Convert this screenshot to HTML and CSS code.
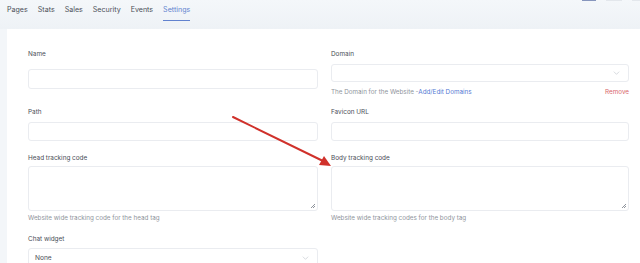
FILE: index.html
```html
<!DOCTYPE html>
<html lang="en">
<head>
    <meta charset="UTF-8">
    <meta name="viewport" content="width=device-width, initial-scale=1.0">
    <link rel="stylesheet" href="styles.css">
</head>
<body>

    <div class="topbar">
        <nav class="tabs">
            <a class="tab">Pages</a>
            <a class="tab">Stats</a>
            <a class="tab">Sales</a>
            <a class="tab">Security</a>
            <a class="tab">Events</a>
            <a class="tab active">Settings</a>
        </nav>
        <div class="toolbar">
            <span class="tool-btn primary"></span>
            <span class="tool-btn"></span>
            <span class="tool-btn last"></span>
        </div>
    </div>

    <div class="card">
        <div class="form-grid">
            <div class="field">
                <label class="field-label name-label">Name</label>
                <input class="input" type="text">
            </div>
            <div class="field">
                <label class="field-label">Domain</label>
                <div class="select small">
                    <span></span>
                    <svg class="chevron" viewBox="0 0 10 6"><path d="M1 1l4 4 4-4" fill="none" stroke="#c4c8cf" stroke-width="1"/></svg>
                </div>
                <div class="help-row">
                    <span class="help">The Domain for the Website -<a class="link">Add/Edit Domains</a></span>
                    <a class="remove">Remove</a>
                </div>
            </div>

            <div class="field">
                <label class="field-label">Path</label>
                <input class="input short" type="text">
            </div>
            <div class="field">
                <label class="field-label">Favicon URL</label>
                <input class="input short" type="text">
            </div>

            <div class="field">
                <label class="field-label tight">Head tracking code</label>
                <div class="textarea"><span class="grip"></span></div>
                <span class="help">Website wide tracking code for the head tag</span>
            </div>
            <div class="field">
                <label class="field-label tight">Body tracking code</label>
                <div class="textarea"><span class="grip"></span></div>
                <span class="help">Website wide tracking codes for the body tag</span>
            </div>

            <div class="field">
                <label class="field-label tight">Chat widget</label>
                <div class="select">
                    <span class="select-value">None</span>
                    <svg class="chevron" viewBox="0 0 10 6"><path d="M1 1l4 4 4-4" fill="none" stroke="#c4c8cf" stroke-width="1"/></svg>
                </div>
            </div>
        </div>

        <svg class="arrow" width="110" height="60" viewBox="0 0 110 60">
            <line x1="2" y1="2" x2="92" y2="46" stroke="#d0312b" stroke-width="2" stroke-linecap="round"/>
            <polygon points="100,51 88,50 93,41" fill="#d0312b"/>
        </svg>
    </div>

</body>
</html>
```

FILE: styles.css
```css
body {
    margin: 0;
    padding: 0;
    background-color: #f3f6f9;
    font-family: "Inter", "Liberation Sans", sans-serif;
    color: #4a4e57;
    overflow: hidden;
}

.topbar {
    display: flex;
    justify-content: space-between;
    align-items: flex-start;
    height: 29px;
    background: linear-gradient(#f4f7fa, #eef2f6);
}

.tabs {
    display: flex;
    gap: 10px;
    padding-left: 7px;
    padding-top: 4px;
}

.tab {
    font-size: 7.1px;
    line-height: 12px;
    padding-bottom: 4px;
    color: #4a4e57;
    border-bottom: 1px solid transparent;
}

.tab.active {
    color: #6182cf;
    border-bottom-color: #6182cf;
}

.toolbar {
    display: flex;
    gap: 10px;
}

.tool-btn {
    display: block;
    width: 16px;
    height: 1px;
    background-color: #e3e7ec;
}

.tool-btn.primary {
    width: 14px;
    background-color: #8796bd;
}

.tool-btn.last {
    width: 8px;
}

.card {
    position: relative;
    background-color: #fff;
    margin-left: 7px;
    padding: 20px 0 0 21px;
    height: 300px;
}

.form-grid {
    display: grid;
    grid-template-columns: 290px 298px;
    column-gap: 13px;
}

.field {
    display: flex;
    flex-direction: column;
    padding-bottom: 10px;
}

.field-label {
    font-size: 6.4px;
    line-height: 10px;
    color: #4a4e57;
    margin-bottom: 5px;
}

.field-label.name-label {
    margin-bottom: 10px;
}

.field-label.tight {
    margin-bottom: 3px;
}

.field:nth-child(3),
.field:nth-child(4) {
    padding-bottom: 12px;
}

.field:nth-child(5),
.field:nth-child(6) {
    padding-bottom: 11px;
}

.field:nth-child(7) .field-label {
    margin-bottom: 4px;
}

.input {
    box-sizing: border-box;
    height: 20px;
    border: 1px solid #eaecf0;
    border-radius: 3px;
    margin: 0;
    padding: 0;
    background: #fff;
}

.input.short {
    height: 19px;
}

.select {
    position: relative;
    box-sizing: border-box;
    height: 20px;
    border: 1px solid #eaecf0;
    border-radius: 3px;
    display: flex;
    align-items: center;
    justify-content: space-between;
    padding: 0 8px 0 6px;
}

.select.small {
    height: 18px;
}

.select-value {
    font-size: 6.6px;
    color: #4a4e57;
}

.chevron {
    width: 7px;
    height: 4px;
}

.help-row {
    display: flex;
    justify-content: space-between;
    margin-top: 5px;
}

.help {
    font-size: 6.3px;
    line-height: 10px;
    color: #8f949c;
}

.link {
    color: #5479d4;
}

.remove {
    font-size: 6.3px;
    line-height: 10px;
    color: #d8666a;
}

.textarea {
    position: relative;
    box-sizing: border-box;
    height: 45px;
    border: 1px solid #eaecf0;
    border-radius: 3px;
    margin-bottom: 2px;
}

.grip {
    position: absolute;
    right: 2px;
    bottom: 2px;
    width: 4px;
    height: 4px;
    background: linear-gradient(135deg, transparent 45%, #8f949c 45%, #8f949c 58%, transparent 58%, transparent 70%, #8f949c 70%, #8f949c 83%, transparent 83%);
}

.arrow {
    position: absolute;
    left: 224px;
    top: 86px;
}
```
